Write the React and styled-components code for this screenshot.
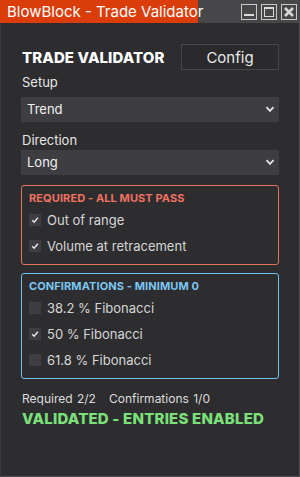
import React from "react";
import styled, { createGlobalStyle } from "styled-components";

const Global = createGlobalStyle`
  html, body { margin: 0; padding: 0; background: #2d2d30; }
  body { font-family: Inter, "Noto Sans", sans-serif; }
  * { box-sizing: border-box; }
`;

const Window = styled.div`
  width: 300px;
  height: 477px;
  display: flex;
  flex-direction: column;
  background: #2d2d30;
  border-right: 1px solid #505054;
  border-bottom: 1px solid #505054;
  border-left: 1px solid #3a3a3d;
`;

const TitleBar = styled.div`
  height: 23px;
  display: flex;
  align-items: stretch;
  justify-content: space-between;
  background: #47474a;
  margin-left: -1px;
  margin-right: -1px;
`;

const TitleTag = styled.div`
  width: 198px;
  background: #db3d0a;
  color: #fff;
  font-size: 15px;
  line-height: 23px;
  padding-left: 7px;
  white-space: nowrap;
`;

const WinButtons = styled.div`
  display: flex;
  gap: 4px;
  padding: 4px 3px 0 0;
`;

const WinButton = styled.div`
  width: 16px;
  height: 16px;
  border: 1px solid #c9c9c9;
  display: flex;
  align-items: center;
  justify-content: center;
`;

const Body = styled.div`
  display: flex;
  flex-direction: column;
  padding: 21px 20px 0 20px;
`;

const Header = styled.div`
  display: flex;
  justify-content: space-between;
  align-items: center;
  margin-bottom: 4px;
`;

const Heading = styled.div`
  color: #fff;
  font-weight: 800;
  font-size: 15px;
  letter-spacing: 0.1px;
  padding-left: 1px;
`;

const ConfigButton = styled.div`
  width: 98px;
  height: 26px;
  border: 1px solid #47474a;
  background: #2a2a2c;
  color: #e8e8e8;
  font-size: 15px;
  display: flex;
  align-items: center;
  justify-content: center;
`;

const Label = styled.div`
  color: #e6e6e6;
  font-size: 13px;
  line-height: 16px;
  height: ${(p) => p.$h}px;
  padding-left: 1px;
`;

const Select = styled.div`
  height: 25px;
  background: #3d3d42;
  color: #f0f0f0;
  font-size: 13px;
  display: flex;
  align-items: center;
  justify-content: space-between;
  padding: 0 3px 2px 6px;
  margin-bottom: ${(p) => p.$mb || 0}px;
`;

const Group = styled.div`
  border: 1px solid ${(p) => p.$color};
  border-radius: 3px;
  padding: 5px 7px 5px 7px;
  display: flex;
  flex-direction: column;
  margin-bottom: ${(p) => p.$mb || 0}px;
`;

const GroupTitle = styled.div`
  color: ${(p) => p.$color};
  font-weight: 700;
  font-size: 11px;
  line-height: 14px;
  letter-spacing: 0.1px;
  margin-bottom: 2px;
`;

const Row = styled.div`
  height: 26px;
  display: flex;
  align-items: center;
  gap: 6px;
  color: #d6d6d6;
  font-size: 13px;
`;

const Box = styled.div`
  width: 12px;
  height: 12px;
  background: #3d3d42;
  display: flex;
  align-items: center;
  justify-content: center;
`;

const Summary = styled.div`
  color: #dcdcdc;
  font-size: 12px;
  line-height: 16px;
  word-spacing: 1px;
  white-space: pre;
  margin-bottom: 3px;
  padding-left: 1px;
`;

const Status = styled.div`
  color: #7ce07a;
  font-weight: 800;
  font-size: 15px;
  line-height: 18px;
  letter-spacing: 0.2px;
  padding-left: 1px;
`;

const Chevron = () => (
  <svg width="12" height="12" viewBox="0 0 12 12">
    <path d="M2.5 4.2 L6 7.8 L9.5 4.2" fill="none" stroke="#e0e0e0" strokeWidth="1.9" />
  </svg>
);

const Check = () => (
  <svg width="10" height="10" viewBox="0 0 10 10">
    <path d="M2.2 5.2 L4.2 7.2 L7.8 2.8" fill="none" stroke="#e6e6e6" strokeWidth="1.5" />
  </svg>
);

const CheckRow = ({ checked, children }) => (
  <Row>
    <Box>{checked && <Check />}</Box>
    <span>{children}</span>
  </Row>
);

export default function App() {
  return (
    <>
      <Global />
      <Window>
        <TitleBar>
          <TitleTag>BlowBlock - Trade Validator</TitleTag>
          <WinButtons>
            <WinButton>
              <svg width="14" height="14" viewBox="0 0 14 14">
                <rect x="2" y="9" width="10" height="2" fill="#d8d8d8" />
              </svg>
            </WinButton>
            <WinButton>
              <svg width="14" height="14" viewBox="0 0 14 14">
                <rect x="2.5" y="2.5" width="9" height="9" fill="none" stroke="#d8d8d8" />
                <rect x="2" y="2" width="10" height="2" fill="#d8d8d8" />
              </svg>
            </WinButton>
            <WinButton>
              <svg width="14" height="14" viewBox="0 0 14 14">
                <path d="M3 3 L11 11 M11 3 L3 11" stroke="#d8d8d8" strokeWidth="2.6" />
              </svg>
            </WinButton>
          </WinButtons>
        </TitleBar>
        <Body>
          <Header>
            <Heading>TRADE VALIDATOR</Heading>
            <ConfigButton>Config</ConfigButton>
          </Header>
          <Label $h={23}>Setup</Label>
          <Select $mb={10}>
            <span>Trend</span>
            <Chevron />
          </Select>
          <Label $h={18}>Direction</Label>
          <Select $mb={10}>
            <span>Long</span>
            <Chevron />
          </Select>
          <Group $color="#e3715f" $mb={8}>
            <GroupTitle $color="#f0715f">REQUIRED - ALL MUST PASS</GroupTitle>
            <CheckRow checked>Out of range</CheckRow>
            <CheckRow checked>Volume at retracement</CheckRow>
          </Group>
          <Group $color="#6ec0ee" $mb={12}>
            <GroupTitle $color="#7cc6f0">CONFIRMATIONS - MINIMUM 0</GroupTitle>
            <CheckRow>38.2 % Fibonacci</CheckRow>
            <CheckRow checked>50 % Fibonacci</CheckRow>
            <CheckRow>61.8 % Fibonacci</CheckRow>
          </Group>
          <Summary>Required 2/2   Confirmations 1/0</Summary>
          <Status>VALIDATED - ENTRIES ENABLED</Status>
        </Body>
      </Window>
    </>
  );
}
